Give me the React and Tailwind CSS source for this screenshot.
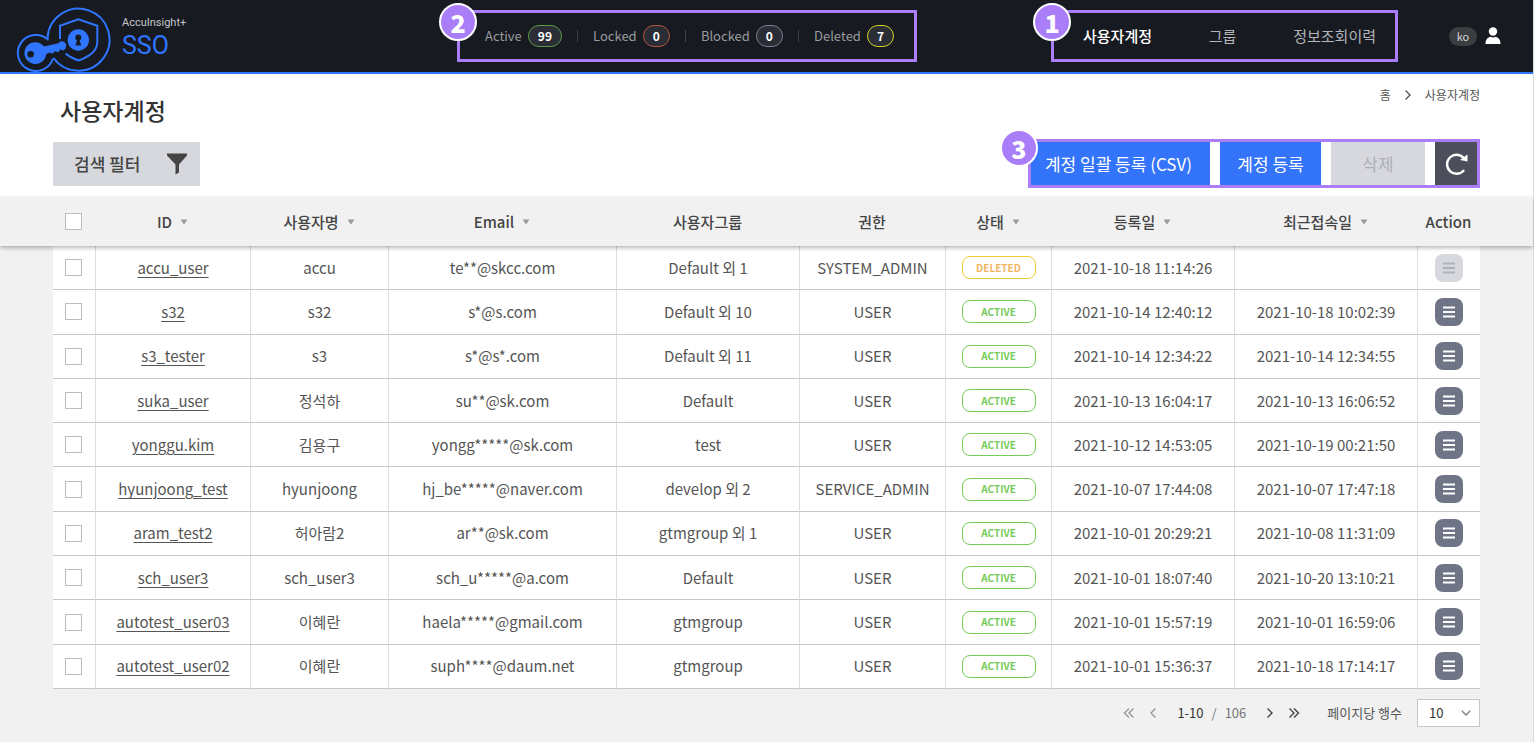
import React from "react";

const PURPLE_FRAME = "relative border-3 border-[#a97ef8]";

const stats = [
  { label: "Active", value: 99, ring: "border-[#5a9a45]" },
  { label: "Locked", value: 0, ring: "border-[#b5563c]" },
  { label: "Blocked", value: 0, ring: "border-[#7c8090]" },
  { label: "Deleted", value: 7, ring: "border-[#d3d420]" },
];

const columns = [
  { label: "ID", sort: true },
  { label: "사용자명", sort: true },
  { label: "Email", sort: true },
  { label: "사용자그룹" },
  { label: "권한" },
  { label: "상태", sort: true },
  { label: "등록일", sort: true },
  { label: "최근접속일", sort: true },
  { label: "Action" },
];

const rows = [
  ["accu_user", "accu", "te**@skcc.com", "Default 외 1", "SYSTEM_ADMIN", "DELETED", "2021-10-18 11:14:26", ""],
  ["s32", "s32", "s*@s.com", "Default 외 10", "USER", "ACTIVE", "2021-10-14 12:40:12", "2021-10-18 10:02:39"],
  ["s3_tester", "s3", "s*@s*.com", "Default 외 11", "USER", "ACTIVE", "2021-10-14 12:34:22", "2021-10-14 12:34:55"],
  ["suka_user", "정석하", "su**@sk.com", "Default", "USER", "ACTIVE", "2021-10-13 16:04:17", "2021-10-13 16:06:52"],
  ["yonggu.kim", "김용구", "yongg*****@sk.com", "test", "USER", "ACTIVE", "2021-10-12 14:53:05", "2021-10-19 00:21:50"],
  ["hyunjoong_test", "hyunjoong", "hj_be*****@naver.com", "develop 외 2", "SERVICE_ADMIN", "ACTIVE", "2021-10-07 17:44:08", "2021-10-07 17:47:18"],
  ["aram_test2", "허아람2", "ar**@sk.com", "gtmgroup 외 1", "USER", "ACTIVE", "2021-10-01 20:29:21", "2021-10-08 11:31:09"],
  ["sch_user3", "sch_user3", "sch_u*****@a.com", "Default", "USER", "ACTIVE", "2021-10-01 18:07:40", "2021-10-20 13:10:21"],
  ["autotest_user03", "이혜란", "haela*****@gmail.com", "gtmgroup", "USER", "ACTIVE", "2021-10-01 15:57:19", "2021-10-01 16:59:06"],
  ["autotest_user02", "이혜란", "suph****@daum.net", "gtmgroup", "USER", "ACTIVE", "2021-10-01 15:36:37", "2021-10-18 17:14:17"],
];

function Marker({ children, place = "-top-[10px] -left-[21px]" }) {
  return (
    <span className={`absolute flex size-[38px] items-center justify-center rounded-full border-2 border-white bg-[#a97ef8] text-[25px] leading-none font-black text-white ${place}`}>
      {children}
    </span>
  );
}

function Logo() {
  return (
    <svg viewBox="0 0 98 68" className="h-[68px] w-[98px]" fill="none" stroke="#2f75ff" strokeWidth="2" aria-hidden="true">
      <path d="M32.5 34.5 A31 31 0 1 1 38.5 54" />
      <path d="M33.5 36.1 A18 18 0 1 0 38 54.5" />
      <path d="M45 35 V21.700 L63.300 15.300 L82.300 21.700 V38 C82.300 46 75 52.500 63.300 56.500 C58.500 54.800 54 52.500 50.500 49.500" />
      <g fill="#2f75ff" stroke="none">
        <circle cx="63.3" cy="36" r="10.700" />
        <path d="M20.300 38.200 C24 38.200 27 39.800 29 42.500 L43.500 39.200 L45 37.600 L49 37.400 L51.300 40.500 L50.600 44.500 L48.300 46.500 L45 45.600 L43.500 48.200 L40 47.200 L37.500 49.800 L35 48.400 L31.200 50 C30.700 55.800 26 60 20.300 60 C14.200 60 9.400 55.200 9.400 49.100 C9.400 43 14.200 38.200 20.300 38.200Z" />
      </g>
      <g fill="#171a21" stroke="none">
        <circle cx="15.700" cy="50.300" r="3.300" />
        <circle cx="63.300" cy="33.400" r="3" />
        <path d="M62 34 H64.600 L64.900 37.500 L66.300 41.500 H60.300 L61.700 37.500Z" />
      </g>
    </svg>
  );
}

function Chevrons({ left, double }) {
  return (
    <svg viewBox="0 0 12 12" className="size-3" fill="none" stroke="currentColor" strokeWidth="1.4" aria-hidden="true">
      <g transform={left ? "translate(12 0) scale(-1 1)" : undefined}>
        {double ? <path d="M1.500 1.500 6 6 1.500 10.500M6 1.500 10.500 6 6 10.500" /> : <path d="M3.500 1.500 8 6 3.500 10.500" />}
      </g>
    </svg>
  );
}

function Tick({ label }) {
  return (
    <input
      type="checkbox"
      aria-label={label}
      className="block size-[17px] appearance-none border border-[#bcbcbc] bg-white checked:bg-[#3374fb]"
    />
  );
}

export default function App() {
  return (
    <div className="min-h-screen border-r border-[#dcdcde] bg-[#f1f1f1] font-['Noto_Sans_CJK_KR',sans-serif] text-[#555]">
      <header className="flex h-[74px] items-center border-b-2 border-[#2f75ff] bg-[#171a21] pr-8 pl-[15px]">
        <a href="#home" className="flex items-center gap-[9px] self-end">
          <Logo />
          <span className="flex flex-col font-[Roboto,sans-serif]">
            <span className="text-[11px] leading-4 text-[#c4c6ca]">AccuInsight+</span>
            <span className="text-[25px] leading-[30px] text-[#2f75ff]">SSO</span>
          </span>
        </a>

        <div className={`${PURPLE_FRAME} ml-auto flex h-[52px] w-[460px] items-center justify-between pr-[20px] pl-[25px] text-[13px] text-[#999a9e]`}>
          <Marker>2</Marker>
          {stats.map((s, i) => (
            <React.Fragment key={s.label}>
              {i > 0 && <span className="h-3 w-px bg-[#3d4047]" />}
              <span className="flex items-center gap-[6px]">
                {s.label}
                <span className={`flex h-[22px] items-center rounded-full border px-[9px] text-xs font-bold text-white bg-[#2a2d35] ${s.ring}`}>
                  {s.value}
                </span>
              </span>
            </React.Fragment>
          ))}
        </div>

        <nav className={`${PURPLE_FRAME} ml-[134px] flex h-[52px] w-[347px] items-center justify-between pr-[19px] pl-[29px] text-[15px] text-[#b4b5b9]`}>
          <Marker>1</Marker>
          <a href="#users" className="font-medium text-white">사용자계정</a>
          <a href="#groups">그룹</a>
          <a href="#history">정보조회이력</a>
        </nav>

        <div className="ml-[51px] flex items-center gap-2">
          <button type="button" className="h-[19px] w-7 rounded-full bg-[#3c3d41] text-[11px] leading-none text-[#d5d5d7]">ko</button>
          <button type="button" aria-label="내 정보" className="text-white">
            <svg viewBox="0 0 16 18" className="h-[18px] w-4" fill="currentColor" aria-hidden="true">
              <circle cx="8" cy="4.500" r="4.200" />
              <path d="M0.500 17 C0.500 12 3 10.500 5.500 9.800 Q8 11.200 10.500 9.800 C13 10.500 15.500 12 15.500 17Z" />
            </svg>
          </button>
        </div>
      </header>

      <section className="bg-white px-[53px] pb-[9px]">
        <div className="flex h-[65px] items-start justify-between">
          <h1 className="pt-[18px] pl-[7px] text-[23px] leading-9 font-medium text-[#333]">사용자계정</h1>
          <nav aria-label="breadcrumb" className="flex items-center gap-[11px] pt-3 text-xs leading-[18px]">
            <a href="#home">홈</a>
            <Chevrons />
            <span>사용자계정</span>
          </nav>
        </div>
        <div className="flex items-center justify-between">
          <button type="button" className="flex h-11 items-center gap-[26px] bg-[#d7d8de] pr-3 pl-[21px] text-[17px] font-medium text-[#444]">
            검색 필터
            <svg viewBox="0 0 22 22" className="size-[22px]" fill="#444" aria-hidden="true">
              <path d="M1 0.500 H21 V2.500 L13 11.500 V19.500 L9.500 21.500 V11.500 L1 2.500Z" />
            </svg>
          </button>
          <div className={`${PURPLE_FRAME} flex h-[49px] items-stretch gap-[10px] text-[17px]`}>
            <Marker place="-top-[13px] -left-[31px]">3</Marker>
            <button type="button" className="bg-[#3374fb] pr-[18px] pl-[14px] text-white">계정 일괄 등록 (CSV)</button>
            <button type="button" className="w-[101px] bg-[#3374fb] text-white">계정 등록</button>
            <button type="button" disabled className="w-[94px] bg-[#d7d8de] text-[#adafba]">삭제</button>
            <button type="button" aria-label="새로고침" className="flex w-[42px] items-center justify-center bg-[#4c4f5b] text-white">
              <svg viewBox="0 0 24 24" className="size-6" fill="none" stroke="currentColor" strokeWidth="2.4" strokeLinecap="round" aria-hidden="true">
                <path d="M19.500 18.800 A9.500 9.500 0 1 1 19.500 5.800" />
                <path d="M23.500 2.500 V9.500 L16 8Z" fill="currentColor" stroke="none" />
              </svg>
            </button>
          </div>
        </div>
      </section>

      <table className="h-[492px] w-full min-w-[1400px] table-fixed border-separate border-spacing-0 text-center text-[15px] leading-[22px]">
        <colgroup>
          <col className="w-[53px]" />
          <col className="w-[42px]" />
          <col className="w-[155px]" />
          <col className="w-[138px]" />
          <col />
          <col className="w-[183px]" />
          <col className="w-[146px]" />
          <col className="w-[106px]" />
          <col className="w-[183px]" />
          <col className="w-[183px]" />
          <col className="w-[63px]" />
          <col className="w-[53px]" />
        </colgroup>
        <thead className="relative z-10 bg-[#f1f1f1] shadow-[0_2px_4px_rgba(0,0,0,0.28)]">
          <tr className="h-[49px]">
            <td />
            <th className="pl-3"><Tick label="전체 선택" /></th>
            {columns.map((c) => (
              <th key={c.label} scope="col" className="p-0 font-medium whitespace-nowrap text-[#444]">
                {c.sort ? (
                  <button type="button" className="inline-flex items-center gap-2">
                    {c.label}
                    <svg viewBox="0 0 8 6" className="h-[6px] w-2 fill-[#999]" aria-hidden="true">
                      <path d="M0.500 0.500 H7.500 L4 5.500Z" />
                    </svg>
                  </button>
                ) : (
                  c.label
                )}
              </th>
            ))}
            <td />
          </tr>
        </thead>
        <tbody>
          {rows.map((r) => {
            const deleted = r[5] === "DELETED";
            const cell = "border-b border-l border-b-[#c6c6c6] border-l-[#dedede] bg-white p-0 whitespace-nowrap";
            return (
              <tr key={r[0]}>
                <td />
                <td className="border-b border-[#c6c6c6] bg-white pl-3"><Tick label={`${r[0]} 선택`} /></td>
                <td className={cell}>
                  <a href={`#${r[0]}`} className="underline underline-offset-3">{r[0]}</a>
                </td>
                {r.slice(1, 5).map((v, i) => (
                  <td key={i} className={cell}>{v}</td>
                ))}
                <td className={cell}>
                  <span
                    className={
                      deleted
                        ? "mx-auto flex h-[23px] w-[74px] items-center justify-center rounded-lg border border-[#efcb2e] text-[10px] font-bold text-[#f2b45e]"
                        : "mx-auto flex h-[23px] w-[74px] items-center justify-center rounded-lg border border-[#74cb58] text-[10px] font-bold text-[#74cb58]"
                    }
                  >
                    {r[5]}
                  </span>
                </td>
                <td className={cell}>{r[6]}</td>
                <td className={cell}>{r[7]}</td>
                <td className={cell}>
                  <button
                    type="button"
                    disabled={deleted}
                    aria-label={`${r[0]} 메뉴`}
                    className={
                      deleted
                        ? "mx-auto flex size-7 items-center justify-center rounded-lg bg-[#d7d8de] text-[#adb0bd]"
                        : "mx-auto flex size-7 items-center justify-center rounded-lg bg-[#6f7586] text-white"
                    }
                  >
                    <svg viewBox="0 0 12 12" className="size-3" fill="currentColor" aria-hidden="true">
                      <path d="M0 0.500h12v2H0zM0 5h12v2H0zM0 9.500h12v2H0z" />
                    </svg>
                  </button>
                </td>
                <td />
              </tr>
            );
          })}
        </tbody>
      </table>

      <footer className="flex items-center justify-end px-[53px] pt-[10px] pb-[15px] text-[13px]">
        <div className="flex items-center text-[#999]">
          <button type="button" aria-label="처음" className="mr-3"><Chevrons left double /></button>
          <button type="button" aria-label="이전"><Chevrons left /></button>
          <span className="ml-[18px] text-[#333]">1-10</span>
          <span className="mx-2 text-[#777]">/</span>
          <span className="mr-[18px] text-[#777]">106</span>
          <button type="button" aria-label="다음" className="mr-3 text-[#444]"><Chevrons /></button>
          <button type="button" aria-label="마지막" className="text-[#444]"><Chevrons double /></button>
        </div>
        <label htmlFor="page-size" className="mr-[15px] ml-[27px]">페이지당 행수</label>
        <span className="relative flex items-center">
          <select id="page-size" className="h-7 w-[63px] appearance-none border border-[#c6c6c6] bg-white pl-[11px] text-[13px] text-[#333]">
            <option>10</option>
            <option>20</option>
            <option>50</option>
          </select>
          <svg viewBox="0 0 10 6" className="pointer-events-none absolute right-[9px] h-[6px] w-[10px]" fill="none" stroke="#888" strokeWidth="1.5" aria-hidden="true">
            <path d="M0.800 0.800 5 5 9.200 0.800" />
          </svg>
        </span>
      </footer>
    </div>
  );
}
